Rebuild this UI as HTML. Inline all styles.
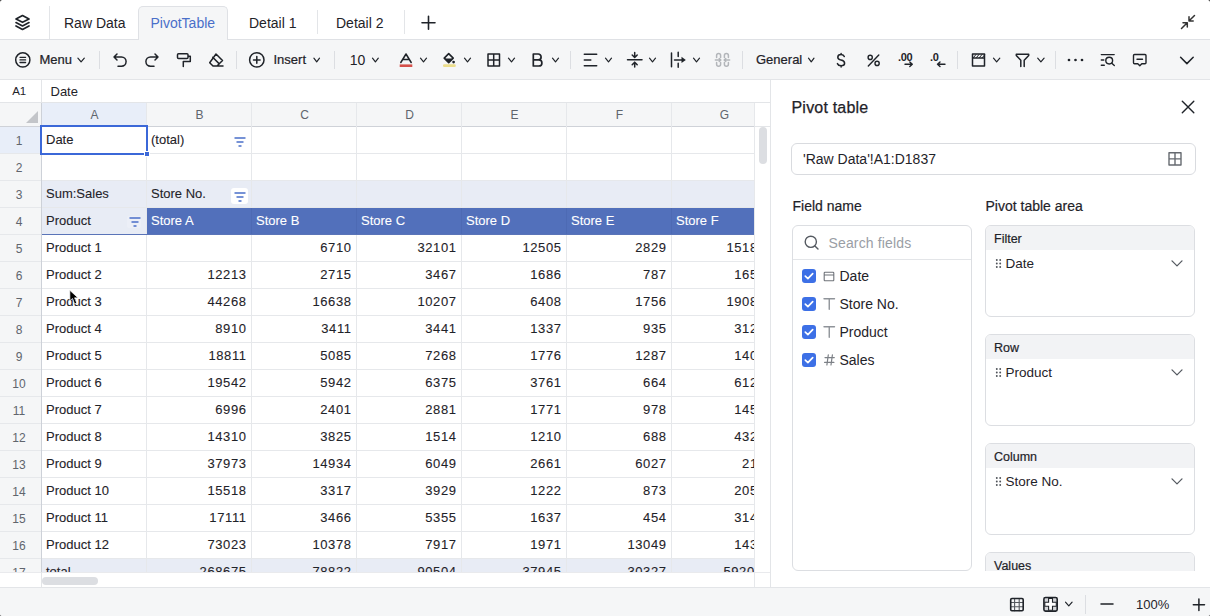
<!DOCTYPE html>
<html><head><meta charset="utf-8"><style>
*{margin:0;padding:0;box-sizing:content-box}
html{background:#3a3a3a}
body{position:relative;width:1210px;height:616px;overflow:hidden;background:#fff;font-family:"Liberation Sans", sans-serif;color:#1f2329;border-radius:2.5px}
.a{position:absolute}
.t{position:absolute;height:0;line-height:0;white-space:nowrap}
.ch{position:absolute;top:103px;height:23px;line-height:24px;text-align:center;font-size:12px;color:#60656d}
.rn{position:absolute;left:0;width:38px;height:26px;line-height:29px;text-align:center;font-size:12px;color:#60656d}
.cl{position:absolute;height:26px;line-height:25px;font-size:13px;white-space:nowrap;-webkit-text-stroke:0.1px currentColor}
.cr{position:absolute;height:26px;line-height:25px;font-size:13px;white-space:nowrap;text-align:right;-webkit-text-stroke:0.1px currentColor}
</style></head><body>
<div class="a" style="left:0;top:39px;width:1210px;height:1px;background:#dfe1e5"></div><div class="a" style="left:138px;top:6px;width:88px;height:34px;background:#f5f6f7;border:1px solid #dfe1e5;border-bottom:none;border-radius:5px 5px 0 0"></div><div class="a" style="left:49px;top:6px;width:1px;height:33px;background:#e3e5e8"></div><div class="a" style="left:317px;top:10px;width:1px;height:24px;background:#e3e5e8"></div><div class="a" style="left:404px;top:10px;width:1px;height:24px;background:#e3e5e8"></div><div class="t" style="left:64px;top:23.15px;font-size:14px;color:#1f2329;">Raw Data</div><div class="t" style="left:150.5px;top:23.15px;font-size:14px;color:#4a6fc9;">PivotTable</div><div class="t" style="left:249px;top:23.15px;font-size:14px;color:#1f2329;">Detail 1</div><div class="t" style="left:336px;top:23.15px;font-size:14px;color:#1f2329;">Detail 2</div><div class="a" style="left:0;top:40px;width:1210px;height:39px;background:#f5f6f7"></div><div class="a" style="left:0;top:79px;width:1210px;height:1px;background:#e3e5e8"></div><div class="t" style="left:39.5px;top:59.50px;font-size:13px;color:#1f2329;-webkit-text-stroke:0.22px #1f2329">Menu</div><div class="t" style="left:273.5px;top:59.50px;font-size:13px;color:#1f2329;-webkit-text-stroke:0.22px #1f2329">Insert</div><div class="t" style="left:349.8px;top:60.05px;font-size:14px;color:#1f2329;">10</div><div class="t" style="left:756px;top:60.20px;font-size:13px;color:#1f2329;-webkit-text-stroke:0.22px #1f2329">General</div><div class="a" style="left:0;top:102px;width:770px;height:1px;background:#e3e5e8"></div><div class="a" style="left:41px;top:80px;width:1px;height:22px;background:#e3e5e8"></div><div class="t" style="left:12.2px;top:91.02px;font-size:11.5px;color:#1f2329;">A1</div><div class="t" style="left:50.5px;top:91.80px;font-size:13px;color:#1f2329;">Date</div><div class="a" style="left:0;top:572px;width:770px;height:1px;background:#e9eaed"></div><div class="a" style="left:41px;top:572px;width:1px;height:15px;background:#e3e5e8"></div><div class="a" style="left:754px;top:103px;width:1px;height:484px;background:#e6e8eb"></div><div class="a" style="left:754px;top:126px;width:16px;height:1px;background:#e3e5e8"></div><div class="a" style="left:42px;top:577px;width:56px;height:8px;background:#dcdee2;border-radius:4px"></div><div class="a" style="left:759px;top:127px;width:8px;height:37px;background:#dcdee2;border-radius:4px"></div><div class="a" style="left:770px;top:80px;width:1px;height:507px;background:#e3e5e8"></div><div class="t" style="left:791.5px;top:107.76px;font-size:16px;color:#1f2329;letter-spacing:0.2px;-webkit-text-stroke:0.25px #1f2329">Pivot table</div><div class="a" style="left:791px;top:143px;width:403px;height:30px;border:1px solid #d9dbdf;border-radius:6px"></div><div class="t" style="left:803px;top:158.75px;font-size:14px;color:#1f2329;">'Raw Data'!A1:D1837</div><div class="t" style="left:792.5px;top:206.15px;font-size:14px;color:#1f2329;-webkit-text-stroke:0.2px #1f2329">Field name</div><div class="t" style="left:985.5px;top:206.15px;font-size:14px;color:#1f2329;-webkit-text-stroke:0.2px #1f2329">Pivot table area</div><div class="a" style="left:792px;top:225px;width:178px;height:344px;border:1px solid #dcdee2;border-radius:6px"></div><div class="a" style="left:793px;top:259px;width:178px;height:1px;background:#e3e5e8"></div><div class="t" style="left:828.5px;top:242.65px;font-size:14px;color:#9a9ea5;letter-spacing:0.15px">Search fields</div><div class="t" style="left:839.5px;top:276.15px;font-size:14px;color:#1f2329;">Date</div><div class="t" style="left:839.5px;top:304.15px;font-size:14px;color:#1f2329;">Store No.</div><div class="t" style="left:839.5px;top:332.15px;font-size:14px;color:#1f2329;">Product</div><div class="t" style="left:839.5px;top:360.15px;font-size:14px;color:#1f2329;">Sales</div><div class="a" style="left:985px;top:225px;width:208px;height:90px;border:1px solid #dcdee2;border-radius:6px;overflow:hidden"><div style="height:24px;background:#f2f3f5"></div></div><div class="t" style="left:994px;top:238.67px;font-size:12.5px;color:#1f2329;-webkit-text-stroke:0.2px #1f2329">Filter</div><div class="t" style="left:1005.5px;top:264.12px;font-size:13.5px;color:#1f2329;">Date</div><div class="a" style="left:985px;top:334px;width:208px;height:90px;border:1px solid #dcdee2;border-radius:6px;overflow:hidden"><div style="height:24px;background:#f2f3f5"></div></div><div class="t" style="left:994px;top:347.67px;font-size:12.5px;color:#1f2329;-webkit-text-stroke:0.2px #1f2329">Row</div><div class="t" style="left:1005.5px;top:373.12px;font-size:13.5px;color:#1f2329;">Product</div><div class="a" style="left:985px;top:443px;width:208px;height:90px;border:1px solid #dcdee2;border-radius:6px;overflow:hidden"><div style="height:24px;background:#f2f3f5"></div></div><div class="t" style="left:994px;top:456.67px;font-size:12.5px;color:#1f2329;-webkit-text-stroke:0.2px #1f2329">Column</div><div class="t" style="left:1005.5px;top:482.12px;font-size:13.5px;color:#1f2329;">Store No.</div><div class="a" style="left:985px;top:552px;width:208px;height:90px;border:1px solid #dcdee2;border-radius:6px;overflow:hidden"><div style="height:24px;background:#f2f3f5"></div></div><div class="t" style="left:994px;top:565.67px;font-size:12.5px;color:#1f2329;-webkit-text-stroke:0.2px #1f2329">Values</div><div class="a" style="left:771px;top:571px;width:439px;height:16px;background:#fff"></div><div class="a" style="left:0;top:587px;width:1210px;height:1px;background:#e3e5e8"></div><div class="a" style="left:0;top:588px;width:1210px;height:28px;background:#f5f6f7"></div><div class="t" style="left:1136px;top:605.00px;font-size:13px;color:#1f2329;">100%</div><div class="a" style="left:1085px;top:595px;width:1px;height:19px;background:#dcdee2"></div><div class="a" style="left:99px;top:51px;width:1px;height:18px;background:#dcdee2"></div><div class="a" style="left:236px;top:51px;width:1px;height:18px;background:#dcdee2"></div><div class="a" style="left:334px;top:51px;width:1px;height:18px;background:#dcdee2"></div><div class="a" style="left:570px;top:51px;width:1px;height:18px;background:#dcdee2"></div><div class="a" style="left:742px;top:51px;width:1px;height:18px;background:#dcdee2"></div><div class="a" style="left:957px;top:51px;width:1px;height:18px;background:#dcdee2"></div><div class="a" style="left:1055px;top:51px;width:1px;height:18px;background:#dcdee2"></div><div class="t" style="left:898px;top:57.19px;font-size:11px;color:#1f2329;font-weight:bold;letter-spacing:-0.3px">.00</div><div class="t" style="left:930px;top:57.19px;font-size:11px;color:#1f2329;font-weight:bold;letter-spacing:-0.3px">.0</div>
<div id="grid" style="position:absolute;left:0;top:103px;width:754px;height:469px;overflow:hidden"><div style="position:absolute;left:0;top:-103px;width:755px;height:616px"><div style="position:absolute;left:0;top:103px;width:755px;height:23px;background:#f5f6f7"></div><div style="position:absolute;left:42px;top:103px;width:104px;height:23px;background:#e8eef9"></div><div style="position:absolute;left:0;top:127px;width:41px;height:445px;background:#f5f6f7"></div><div style="position:absolute;left:0;top:127px;width:41px;height:26px;background:#e8eef9"></div><svg style="position:absolute;left:26px;top:111px" width="12" height="12"><path d="M12 0 L12 12 L0 12 Z" fill="#c3c5c9"/></svg><div class="ch" style="left:42px;width:105px">A</div><div class="ch" style="left:147px;width:105px">B</div><div class="ch" style="left:252px;width:105px">C</div><div class="ch" style="left:357px;width:105px">D</div><div class="ch" style="left:462px;width:105px">E</div><div class="ch" style="left:567px;width:105px">F</div><div class="ch" style="left:672px;width:105px">G</div><div style="position:absolute;left:42px;top:181px;width:713px;height:26px;background:#e8ecf5"></div><div style="position:absolute;left:42px;top:208px;width:104px;height:26px;background:#e8ecf5"></div><div style="position:absolute;left:147px;top:208px;width:608px;height:26px;background:#5270bb"></div><div style="position:absolute;left:42px;top:234px;width:713px;height:1px;background:#5a74b8;z-index:2"></div><div style="position:absolute;left:127px;top:216px;width:14px;height:12px;background:rgba(255,255,255,0.2);border-radius:2px"></div><div style="position:absolute;left:42px;top:559px;width:713px;height:26px;background:#e8ecf5"></div><div style="position:absolute;left:0;top:126px;width:755px;height:1px;background:#cfd2d8"></div><div style="position:absolute;left:0;top:153px;width:755px;height:1px;background:#e6e8eb"></div><div style="position:absolute;left:0;top:180px;width:755px;height:1px;background:#e6e8eb"></div><div style="position:absolute;left:0;top:207px;width:755px;height:1px;background:#e6e8eb"></div><div style="position:absolute;left:0;top:234px;width:755px;height:1px;background:#e6e8eb"></div><div style="position:absolute;left:0;top:261px;width:755px;height:1px;background:#e6e8eb"></div><div style="position:absolute;left:0;top:288px;width:755px;height:1px;background:#e6e8eb"></div><div style="position:absolute;left:0;top:315px;width:755px;height:1px;background:#e6e8eb"></div><div style="position:absolute;left:0;top:342px;width:755px;height:1px;background:#e6e8eb"></div><div style="position:absolute;left:0;top:369px;width:755px;height:1px;background:#e6e8eb"></div><div style="position:absolute;left:0;top:396px;width:755px;height:1px;background:#e6e8eb"></div><div style="position:absolute;left:0;top:423px;width:755px;height:1px;background:#e6e8eb"></div><div style="position:absolute;left:0;top:450px;width:755px;height:1px;background:#e6e8eb"></div><div style="position:absolute;left:0;top:477px;width:755px;height:1px;background:#e6e8eb"></div><div style="position:absolute;left:0;top:504px;width:755px;height:1px;background:#e6e8eb"></div><div style="position:absolute;left:0;top:531px;width:755px;height:1px;background:#e6e8eb"></div><div style="position:absolute;left:0;top:558px;width:755px;height:1px;background:#e6e8eb"></div><div style="position:absolute;left:0;top:585px;width:755px;height:1px;background:#e6e8eb"></div><div style="position:absolute;left:41px;top:103px;width:1px;height:469px;background:#cdd1d8"></div><div style="position:absolute;left:146px;top:103px;width:1px;height:469px;background:#e6e8eb"></div><div style="position:absolute;left:251px;top:103px;width:1px;height:469px;background:#e6e8eb"></div><div style="position:absolute;left:356px;top:103px;width:1px;height:469px;background:#e6e8eb"></div><div style="position:absolute;left:461px;top:103px;width:1px;height:469px;background:#e6e8eb"></div><div style="position:absolute;left:566px;top:103px;width:1px;height:469px;background:#e6e8eb"></div><div style="position:absolute;left:671px;top:103px;width:1px;height:469px;background:#e6e8eb"></div><div style="position:absolute;left:251px;top:208px;width:1px;height:26px;background:#4d6ab4"></div><div style="position:absolute;left:356px;top:208px;width:1px;height:26px;background:#4d6ab4"></div><div style="position:absolute;left:461px;top:208px;width:1px;height:26px;background:#4d6ab4"></div><div style="position:absolute;left:566px;top:208px;width:1px;height:26px;background:#4d6ab4"></div><div style="position:absolute;left:671px;top:208px;width:1px;height:26px;background:#4d6ab4"></div><div class="rn" style="top:127px">1</div><div class="rn" style="top:154px">2</div><div class="rn" style="top:181px">3</div><div class="rn" style="top:208px">4</div><div class="rn" style="top:235px">5</div><div class="rn" style="top:262px">6</div><div class="rn" style="top:289px">7</div><div class="rn" style="top:316px">8</div><div class="rn" style="top:343px">9</div><div class="rn" style="top:370px">10</div><div class="rn" style="top:397px">11</div><div class="rn" style="top:424px">12</div><div class="rn" style="top:451px">13</div><div class="rn" style="top:478px">14</div><div class="rn" style="top:505px">15</div><div class="rn" style="top:532px">16</div><div class="rn" style="top:559px">17</div><div class="cl" style="left:46px;top:127px;color:#1f2329;">Date</div><div class="cl" style="left:151px;top:127px;color:#1f2329;">(total)</div><div class="cl" style="left:46px;top:181px;color:#1f2329;">Sum:Sales</div><div class="cl" style="left:151px;top:181px;color:#1f2329;">Store No.</div><div class="cl" style="left:46px;top:208px;color:#1f2329;">Product</div><div class="cl" style="left:151px;top:208px;color:#ffffff;">Store A</div><div class="cl" style="left:256px;top:208px;color:#ffffff;">Store B</div><div class="cl" style="left:361px;top:208px;color:#ffffff;">Store C</div><div class="cl" style="left:466px;top:208px;color:#ffffff;">Store D</div><div class="cl" style="left:571px;top:208px;color:#ffffff;">Store E</div><div class="cl" style="left:676px;top:208px;color:#ffffff;">Store F</div><div class="cl" style="left:46px;top:235px;color:#1f2329;">Product 1</div><div class="cr" style="right:404px;top:235px;color:#1f2329;letter-spacing:0.6px;margin-right:-0.6px">6710</div><div class="cr" style="right:299px;top:235px;color:#1f2329;letter-spacing:0.6px;margin-right:-0.6px">32101</div><div class="cr" style="right:194px;top:235px;color:#1f2329;letter-spacing:0.6px;margin-right:-0.6px">12505</div><div class="cr" style="right:89px;top:235px;color:#1f2329;letter-spacing:0.6px;margin-right:-0.6px">2829</div><div class="cr" style="right:-10px;top:235px;color:#1f2329;letter-spacing:0.6px;margin-right:-0.6px">15180</div><div class="cl" style="left:46px;top:262px;color:#1f2329;">Product 2</div><div class="cr" style="right:509px;top:262px;color:#1f2329;letter-spacing:0.6px;margin-right:-0.6px">12213</div><div class="cr" style="right:404px;top:262px;color:#1f2329;letter-spacing:0.6px;margin-right:-0.6px">2715</div><div class="cr" style="right:299px;top:262px;color:#1f2329;letter-spacing:0.6px;margin-right:-0.6px">3467</div><div class="cr" style="right:194px;top:262px;color:#1f2329;letter-spacing:0.6px;margin-right:-0.6px">1686</div><div class="cr" style="right:89px;top:262px;color:#1f2329;letter-spacing:0.6px;margin-right:-0.6px">787</div><div class="cr" style="right:-10px;top:262px;color:#1f2329;letter-spacing:0.6px;margin-right:-0.6px">1650</div><div class="cl" style="left:46px;top:289px;color:#1f2329;">Product 3</div><div class="cr" style="right:509px;top:289px;color:#1f2329;letter-spacing:0.6px;margin-right:-0.6px">44268</div><div class="cr" style="right:404px;top:289px;color:#1f2329;letter-spacing:0.6px;margin-right:-0.6px">16638</div><div class="cr" style="right:299px;top:289px;color:#1f2329;letter-spacing:0.6px;margin-right:-0.6px">10207</div><div class="cr" style="right:194px;top:289px;color:#1f2329;letter-spacing:0.6px;margin-right:-0.6px">6408</div><div class="cr" style="right:89px;top:289px;color:#1f2329;letter-spacing:0.6px;margin-right:-0.6px">1756</div><div class="cr" style="right:-10px;top:289px;color:#1f2329;letter-spacing:0.6px;margin-right:-0.6px">19080</div><div class="cl" style="left:46px;top:316px;color:#1f2329;">Product 4</div><div class="cr" style="right:509px;top:316px;color:#1f2329;letter-spacing:0.6px;margin-right:-0.6px">8910</div><div class="cr" style="right:404px;top:316px;color:#1f2329;letter-spacing:0.6px;margin-right:-0.6px">3411</div><div class="cr" style="right:299px;top:316px;color:#1f2329;letter-spacing:0.6px;margin-right:-0.6px">3441</div><div class="cr" style="right:194px;top:316px;color:#1f2329;letter-spacing:0.6px;margin-right:-0.6px">1337</div><div class="cr" style="right:89px;top:316px;color:#1f2329;letter-spacing:0.6px;margin-right:-0.6px">935</div><div class="cr" style="right:-10px;top:316px;color:#1f2329;letter-spacing:0.6px;margin-right:-0.6px">3120</div><div class="cl" style="left:46px;top:343px;color:#1f2329;">Product 5</div><div class="cr" style="right:509px;top:343px;color:#1f2329;letter-spacing:0.6px;margin-right:-0.6px">18811</div><div class="cr" style="right:404px;top:343px;color:#1f2329;letter-spacing:0.6px;margin-right:-0.6px">5085</div><div class="cr" style="right:299px;top:343px;color:#1f2329;letter-spacing:0.6px;margin-right:-0.6px">7268</div><div class="cr" style="right:194px;top:343px;color:#1f2329;letter-spacing:0.6px;margin-right:-0.6px">1776</div><div class="cr" style="right:89px;top:343px;color:#1f2329;letter-spacing:0.6px;margin-right:-0.6px">1287</div><div class="cr" style="right:-10px;top:343px;color:#1f2329;letter-spacing:0.6px;margin-right:-0.6px">1400</div><div class="cl" style="left:46px;top:370px;color:#1f2329;">Product 6</div><div class="cr" style="right:509px;top:370px;color:#1f2329;letter-spacing:0.6px;margin-right:-0.6px">19542</div><div class="cr" style="right:404px;top:370px;color:#1f2329;letter-spacing:0.6px;margin-right:-0.6px">5942</div><div class="cr" style="right:299px;top:370px;color:#1f2329;letter-spacing:0.6px;margin-right:-0.6px">6375</div><div class="cr" style="right:194px;top:370px;color:#1f2329;letter-spacing:0.6px;margin-right:-0.6px">3761</div><div class="cr" style="right:89px;top:370px;color:#1f2329;letter-spacing:0.6px;margin-right:-0.6px">664</div><div class="cr" style="right:-10px;top:370px;color:#1f2329;letter-spacing:0.6px;margin-right:-0.6px">6120</div><div class="cl" style="left:46px;top:397px;color:#1f2329;">Product 7</div><div class="cr" style="right:509px;top:397px;color:#1f2329;letter-spacing:0.6px;margin-right:-0.6px">6996</div><div class="cr" style="right:404px;top:397px;color:#1f2329;letter-spacing:0.6px;margin-right:-0.6px">2401</div><div class="cr" style="right:299px;top:397px;color:#1f2329;letter-spacing:0.6px;margin-right:-0.6px">2881</div><div class="cr" style="right:194px;top:397px;color:#1f2329;letter-spacing:0.6px;margin-right:-0.6px">1771</div><div class="cr" style="right:89px;top:397px;color:#1f2329;letter-spacing:0.6px;margin-right:-0.6px">978</div><div class="cr" style="right:-10px;top:397px;color:#1f2329;letter-spacing:0.6px;margin-right:-0.6px">1450</div><div class="cl" style="left:46px;top:424px;color:#1f2329;">Product 8</div><div class="cr" style="right:509px;top:424px;color:#1f2329;letter-spacing:0.6px;margin-right:-0.6px">14310</div><div class="cr" style="right:404px;top:424px;color:#1f2329;letter-spacing:0.6px;margin-right:-0.6px">3825</div><div class="cr" style="right:299px;top:424px;color:#1f2329;letter-spacing:0.6px;margin-right:-0.6px">1514</div><div class="cr" style="right:194px;top:424px;color:#1f2329;letter-spacing:0.6px;margin-right:-0.6px">1210</div><div class="cr" style="right:89px;top:424px;color:#1f2329;letter-spacing:0.6px;margin-right:-0.6px">688</div><div class="cr" style="right:-10px;top:424px;color:#1f2329;letter-spacing:0.6px;margin-right:-0.6px">4320</div><div class="cl" style="left:46px;top:451px;color:#1f2329;">Product 9</div><div class="cr" style="right:509px;top:451px;color:#1f2329;letter-spacing:0.6px;margin-right:-0.6px">37973</div><div class="cr" style="right:404px;top:451px;color:#1f2329;letter-spacing:0.6px;margin-right:-0.6px">14934</div><div class="cr" style="right:299px;top:451px;color:#1f2329;letter-spacing:0.6px;margin-right:-0.6px">6049</div><div class="cr" style="right:194px;top:451px;color:#1f2329;letter-spacing:0.6px;margin-right:-0.6px">2661</div><div class="cr" style="right:89px;top:451px;color:#1f2329;letter-spacing:0.6px;margin-right:-0.6px">6027</div><div class="cr" style="right:-10px;top:451px;color:#1f2329;letter-spacing:0.6px;margin-right:-0.6px">210</div><div class="cl" style="left:46px;top:478px;color:#1f2329;">Product 10</div><div class="cr" style="right:509px;top:478px;color:#1f2329;letter-spacing:0.6px;margin-right:-0.6px">15518</div><div class="cr" style="right:404px;top:478px;color:#1f2329;letter-spacing:0.6px;margin-right:-0.6px">3317</div><div class="cr" style="right:299px;top:478px;color:#1f2329;letter-spacing:0.6px;margin-right:-0.6px">3929</div><div class="cr" style="right:194px;top:478px;color:#1f2329;letter-spacing:0.6px;margin-right:-0.6px">1222</div><div class="cr" style="right:89px;top:478px;color:#1f2329;letter-spacing:0.6px;margin-right:-0.6px">873</div><div class="cr" style="right:-10px;top:478px;color:#1f2329;letter-spacing:0.6px;margin-right:-0.6px">2050</div><div class="cl" style="left:46px;top:505px;color:#1f2329;">Product 11</div><div class="cr" style="right:509px;top:505px;color:#1f2329;letter-spacing:0.6px;margin-right:-0.6px">17111</div><div class="cr" style="right:404px;top:505px;color:#1f2329;letter-spacing:0.6px;margin-right:-0.6px">3466</div><div class="cr" style="right:299px;top:505px;color:#1f2329;letter-spacing:0.6px;margin-right:-0.6px">5355</div><div class="cr" style="right:194px;top:505px;color:#1f2329;letter-spacing:0.6px;margin-right:-0.6px">1637</div><div class="cr" style="right:89px;top:505px;color:#1f2329;letter-spacing:0.6px;margin-right:-0.6px">454</div><div class="cr" style="right:-10px;top:505px;color:#1f2329;letter-spacing:0.6px;margin-right:-0.6px">3140</div><div class="cl" style="left:46px;top:532px;color:#1f2329;">Product 12</div><div class="cr" style="right:509px;top:532px;color:#1f2329;letter-spacing:0.6px;margin-right:-0.6px">73023</div><div class="cr" style="right:404px;top:532px;color:#1f2329;letter-spacing:0.6px;margin-right:-0.6px">10378</div><div class="cr" style="right:299px;top:532px;color:#1f2329;letter-spacing:0.6px;margin-right:-0.6px">7917</div><div class="cr" style="right:194px;top:532px;color:#1f2329;letter-spacing:0.6px;margin-right:-0.6px">1971</div><div class="cr" style="right:89px;top:532px;color:#1f2329;letter-spacing:0.6px;margin-right:-0.6px">13049</div><div class="cr" style="right:-10px;top:532px;color:#1f2329;letter-spacing:0.6px;margin-right:-0.6px">1430</div><div class="cl" style="left:46px;top:559px;color:#1f2329;">total</div><div class="cr" style="right:509px;top:559px;color:#1f2329;letter-spacing:0.6px;margin-right:-0.6px">268675</div><div class="cr" style="right:404px;top:559px;color:#1f2329;letter-spacing:0.6px;margin-right:-0.6px">78822</div><div class="cr" style="right:299px;top:559px;color:#1f2329;letter-spacing:0.6px;margin-right:-0.6px">90504</div><div class="cr" style="right:194px;top:559px;color:#1f2329;letter-spacing:0.6px;margin-right:-0.6px">37945</div><div class="cr" style="right:89px;top:559px;color:#1f2329;letter-spacing:0.6px;margin-right:-0.6px">30327</div><div class="cr" style="right:-7px;top:559px;color:#1f2329;letter-spacing:0.6px;margin-right:-0.6px">59200</div><svg style="position:absolute;left:234px;top:137px" width="12" height="10"><path d="M0.5 1h11M2.5 5h7M4.5 9h3" stroke="#4a6fc9" stroke-width="1.3" fill="none"/></svg><div style="position:absolute;left:231px;top:188px;width:17px;height:16px;background:#ffffff;border-radius:3px"></div><svg style="position:absolute;left:234px;top:192px" width="12" height="10"><path d="M0.5 1h11M2.5 5h7M4.5 9h3" stroke="#4a6fc9" stroke-width="1.3" fill="none"/></svg><svg style="position:absolute;left:129px;top:217px" width="12" height="10"><path d="M0.5 1h11M2.5 5h7M4.5 9h3" stroke="#4a6fc9" stroke-width="1.3" fill="none"/></svg><div style="position:absolute;left:40px;top:125px;width:104px;height:26px;border:2px solid #3b68d8"></div><div style="position:absolute;left:144px;top:151px;width:6px;height:6px;background:#fff"></div><div style="position:absolute;left:145px;top:152px;width:4px;height:4px;background:#3b68d8"></div></div></div>
<svg class="a" style="left:0;top:0" width="1210" height="616" viewBox="0 0 1210 616"><path d="M22.5 15.5 L29 19 L22.5 22.3 L16 19 Z" fill="none" stroke="#1f2329" stroke-width="1.7" stroke-linecap="round" stroke-linejoin="round" /><path d="M16 22.6 L22.5 26 L29 22.6" fill="none" stroke="#1f2329" stroke-width="1.7" stroke-linecap="round" stroke-linejoin="round" /><path d="M16 26 L22.5 29.4 L29 26" fill="none" stroke="#1f2329" stroke-width="1.7" stroke-linecap="round" stroke-linejoin="round" /><path d="M1181.5 28.5 L1187 23 M1183 22.8 H1187.3 V27" fill="none" stroke="#333" stroke-width="1.5" stroke-linecap="round" stroke-linejoin="round" /><path d="M1194.5 15.5 L1189.2 20.8 M1189 16.8 V21 H1193.2" fill="none" stroke="#333" stroke-width="1.5" stroke-linecap="round" stroke-linejoin="round" /><path d="M422 22.7 H435 M428.5 16.3 V29.2" fill="none" stroke="#1f2329" stroke-width="1.6" stroke-linecap="round" stroke-linejoin="round" /><circle cx="22.8" cy="59.9" r="7.1" fill="none" stroke="#1f2329" stroke-width="1.5"/><path d="M20 57.3 H25.6 M20 59.9 H25.6 M20 62.5 H25.6" fill="none" stroke="#1f2329" stroke-width="1.3" stroke-linecap="round" stroke-linejoin="round" /><path d="M77.9 58.2 L81.1 61.8 L84.3 58.2" fill="none" stroke="#1f2329" stroke-width="1.2" stroke-linecap="round" stroke-linejoin="round" /><path d="M117 54 L114 57 L117 60 M114 57 H121.5 A4.6 4.6 0 0 1 121.5 66.2 H118" fill="none" stroke="#1f2329" stroke-width="1.5" stroke-linecap="round" stroke-linejoin="round" /><path d="M155 54 L158 57 L155 60 M158 57 H150.5 A4.6 4.6 0 0 0 150.5 66.2 H154" fill="none" stroke="#1f2329" stroke-width="1.5" stroke-linecap="round" stroke-linejoin="round" /><path d="M178.5 53.8 H187 A1 1 0 0 1 188 54.8 V57.5 A1 1 0 0 1 187 58.5 H178.5 A1 1 0 0 1 177.5 57.5 V54.8 A1 1 0 0 1 178.5 53.8 Z M188 56.2 H190.3 V61.5 H183.3 V66.5" fill="none" stroke="#1f2329" stroke-width="1.5" stroke-linecap="round" stroke-linejoin="round" /><path d="M216 54 L222.5 60.5 L217 66 H213 L209.7 62.7 Z M212.7 57.3 L219.3 63.9 M217 66 H223" fill="none" stroke="#1f2329" stroke-width="1.5" stroke-linecap="round" stroke-linejoin="round" /><circle cx="256.8" cy="59.9" r="7.2" fill="none" stroke="#1f2329" stroke-width="1.5"/><path d="M253.5 59.9 H260.1 M256.8 56.6 V63.2" fill="none" stroke="#1f2329" stroke-width="1.5" stroke-linecap="round" stroke-linejoin="round" /><path d="M313.9 58.2 L316.7 61.8 L319.5 58.2" fill="none" stroke="#1f2329" stroke-width="1.2" stroke-linecap="round" stroke-linejoin="round" /><path d="M372.5 58.2 L375.4 61.8 L378.3 58.2" fill="none" stroke="#1f2329" stroke-width="1.2" stroke-linecap="round" stroke-linejoin="round" /><path d="M400.8 62.5 L406 54 L411.2 62.5 M402.6 59.6 H409.4" fill="none" stroke="#1f2329" stroke-width="1.5" stroke-linecap="round" stroke-linejoin="round" /><rect x="399.7" y="64.4" width="12.6" height="2.6" fill="#d5504a"/><path d="M420.5 58.2 L423.5 61.8 L426.5 58.2" fill="none" stroke="#1f2329" stroke-width="1.2" stroke-linecap="round" stroke-linejoin="round" /><path d="M448.7 53.6 L453.2 58.1 L448.7 62.6 L444.2 58.1 Z" fill="none" stroke="#1f2329" stroke-width="1.6" stroke-linecap="round" stroke-linejoin="round" /><path d="M444.6 58.6 L452.8 58.6 L448.7 62.6 Z" fill="#1f2329"/><circle cx="453.6" cy="62.1" r="1.35" fill="#1f2329"/><rect x="443" y="64.2" width="12.8" height="2.8" rx="1.2" fill="#ebdd8c"/><path d="M464.5 58.2 L467.5 61.8 L470.5 58.2" fill="none" stroke="#1f2329" stroke-width="1.2" stroke-linecap="round" stroke-linejoin="round" /><path d="M488 54 H499.5 V66 H488 Z M493.7 54 V66 M488 60 H499.5" fill="none" stroke="#1f2329" stroke-width="1.5" stroke-linecap="round" stroke-linejoin="round" /><path d="M508.5 58.2 L511.5 61.8 L514.5 58.2" fill="none" stroke="#1f2329" stroke-width="1.2" stroke-linecap="round" stroke-linejoin="round" /><path d="M533.3 54 H538.2 A2.9 2.9 0 0 1 538.2 59.8 H533.3 Z M533.3 59.8 H538.8 A3.1 3.1 0 0 1 538.8 66 H533.3 Z" fill="none" stroke="#1f2329" stroke-width="1.7" stroke-linecap="round" stroke-linejoin="round" /><path d="M552.5 58.2 L555.5 61.8 L558.5 58.2" fill="none" stroke="#1f2329" stroke-width="1.2" stroke-linecap="round" stroke-linejoin="round" /><path d="M584.3 54.3 H596.7 M584.3 60 H590.8 M584.3 65.7 H596.7" fill="none" stroke="#1f2329" stroke-width="1.5" stroke-linecap="round" stroke-linejoin="round" /><path d="M605.5 58.2 L608.5 61.8 L611.5 58.2" fill="none" stroke="#1f2329" stroke-width="1.2" stroke-linecap="round" stroke-linejoin="round" /><path d="M627.5 59.8 H642 M634.7 52.5 V57.3 M632.2 55 L634.7 57.5 L637.2 55 M634.7 67 V62.3 M632.2 64.8 L634.7 62.2 L637.2 64.8" fill="none" stroke="#1f2329" stroke-width="1.5" stroke-linecap="round" stroke-linejoin="round" /><path d="M649.5 58.2 L652.5 61.8 L655.5 58.2" fill="none" stroke="#1f2329" stroke-width="1.2" stroke-linecap="round" stroke-linejoin="round" /><path d="M671.5 53 V66.8 M678.2 52.3 V56.5 M678.2 63.3 V67.3 M674.5 59.9 H682" fill="none" stroke="#1f2329" stroke-width="1.5" stroke-linecap="round" stroke-linejoin="round" /><path d="M681.5 56.8 L685.8 59.9 L681.5 63 Z" fill="#1f2329"/><path d="M693.5 58.2 L696.5 61.8 L699.5 58.2" fill="none" stroke="#1f2329" stroke-width="1.2" stroke-linecap="round" stroke-linejoin="round" /><path d="M716.6 57.4 V55.6 A2 2 0 0 1 720.6 55.6 V57.4 M716.6 62.5 V64.3 A2 2 0 0 0 720.6 64.3 V62.5 M724.4 57.4 V55.6 A2 2 0 0 1 728.4 55.6 V57.4 M724.4 62.5 V64.3 A2 2 0 0 0 728.4 64.3 V62.5" fill="none" stroke="#b3b6ba" stroke-width="1.5" stroke-linecap="round" stroke-linejoin="round" /><path d="M715.3 60 H720.8 M719.2 58.4 L720.9 60 L719.2 61.6 M729.7 60 H724.2 M725.8 58.4 L724.1 60 L725.8 61.6" fill="none" stroke="#b3b6ba" stroke-width="1.4" stroke-linecap="round" stroke-linejoin="round" /><path d="M808.5 58.2 L811.25 61.8 L814.0 58.2" fill="none" stroke="#1f2329" stroke-width="1.2" stroke-linecap="round" stroke-linejoin="round" /><path d="M972.5 54 H984.5 V66 H972.5 Z M972.5 58 H984.5" fill="none" stroke="#1f2329" stroke-width="1.5" stroke-linecap="round" stroke-linejoin="round" /><path d="M973.5 57.5 L976 54.5 M976.5 57.5 L979 54.5 M979.5 57.5 L982 54.5 M982.5 57.5 L984.5 55" fill="none" stroke="#1f2329" stroke-width="1" stroke-linecap="round" stroke-linejoin="round" /><path d="M993.5 58.2 L996.65 61.8 L999.8 58.2" fill="none" stroke="#1f2329" stroke-width="1.2" stroke-linecap="round" stroke-linejoin="round" /><path d="M1016.3 54.3 H1028.7 V55.5 L1024.2 60.3 V66.4 M1016.3 54.3 V55.5 L1020.8 60.3 V66.4" fill="none" stroke="#1f2329" stroke-width="1.5" stroke-linecap="round" stroke-linejoin="round" /><path d="M1037.7 58.2 L1040.9 61.8 L1044.1 58.2" fill="none" stroke="#1f2329" stroke-width="1.2" stroke-linecap="round" stroke-linejoin="round" /><circle cx="1069" cy="60" r="1.35" fill="#1f2329"/><circle cx="1075.5" cy="60" r="1.35" fill="#1f2329"/><circle cx="1082" cy="60" r="1.35" fill="#1f2329"/><path d="M1101.3 54.6 H1114.2 M1101.3 60 H1103.8 M1101.3 65.3 H1104.3" fill="none" stroke="#1f2329" stroke-width="1.4" stroke-linecap="round" stroke-linejoin="round" /><circle cx="1109.2" cy="60.6" r="3.4" fill="none" stroke="#1f2329" stroke-width="1.4"/><path d="M1111.8 63.2 L1114.3 65.6" fill="none" stroke="#1f2329" stroke-width="1.4" stroke-linecap="round" stroke-linejoin="round" /><path d="M1134.5 54.5 H1145 A1 1 0 0 1 1146 55.5 V62.8 A1 1 0 0 1 1145 63.8 H1141.8 L1139.8 65.8 L1137.8 63.8 H1134.5 A1 1 0 0 1 1133.5 62.8 V55.5 A1 1 0 0 1 1134.5 54.5 Z M1137 59.2 H1142.5" fill="none" stroke="#1f2329" stroke-width="1.4" stroke-linecap="round" stroke-linejoin="round" /><path d="M1180.6 57.2 L1186.9 63.6 L1193.2 57.2" fill="none" stroke="#1f2329" stroke-width="1.5" stroke-linecap="round" stroke-linejoin="round" /><path d="M1182.3 101.2 L1193.8 112.7 M1193.8 101.2 L1182.3 112.7" fill="none" stroke="#1f2329" stroke-width="1.4" stroke-linecap="round" stroke-linejoin="round" /><path d="M1169 152.8 H1181 V165 H1169 Z M1175 152.8 V165 M1169 158.9 H1181" fill="none" stroke="#666a70" stroke-width="1.4" stroke-linecap="round" stroke-linejoin="round" /><circle cx="810.8" cy="241.8" r="5.6" fill="none" stroke="#555a61" stroke-width="1.4"/><path d="M814.9 245.9 L818 249" fill="none" stroke="#555a61" stroke-width="1.4" stroke-linecap="round" stroke-linejoin="round" /><rect x="802" y="269" width="14" height="14" rx="3" fill="#3d70e6"/><path d="M805.3 276.2 L807.9 278.6 L812.7 273.6" fill="none" stroke="#ffffff" stroke-width="1.7" stroke-linecap="round" stroke-linejoin="round" /><rect x="802" y="297" width="14" height="14" rx="3" fill="#3d70e6"/><path d="M805.3 304.2 L807.9 306.6 L812.7 301.6" fill="none" stroke="#ffffff" stroke-width="1.7" stroke-linecap="round" stroke-linejoin="round" /><rect x="802" y="325" width="14" height="14" rx="3" fill="#3d70e6"/><path d="M805.3 332.2 L807.9 334.6 L812.7 329.6" fill="none" stroke="#ffffff" stroke-width="1.7" stroke-linecap="round" stroke-linejoin="round" /><rect x="802" y="353" width="14" height="14" rx="3" fill="#3d70e6"/><path d="M805.3 360.2 L807.9 362.6 L812.7 357.6" fill="none" stroke="#ffffff" stroke-width="1.7" stroke-linecap="round" stroke-linejoin="round" /><path d="M825 272.3 H833 A0.8 0.8 0 0 1 833.8 273.1 V280 A0.8 0.8 0 0 1 833 280.8 H825 A0.8 0.8 0 0 1 824.2 280 V273.1 A0.8 0.8 0 0 1 825 272.3 Z M824.2 275 H833.8" fill="none" stroke="#6f7379" stroke-width="1.1" stroke-linecap="round" stroke-linejoin="round" /><path d="M824 298.8 H834.5 M829.25 298.8 V309.2" fill="none" stroke="#8f9399" stroke-width="1.4" stroke-linecap="round" stroke-linejoin="round" /><path d="M824 326.8 H834.5 M829.25 326.8 V337.2" fill="none" stroke="#8f9399" stroke-width="1.4" stroke-linecap="round" stroke-linejoin="round" /><path d="M825 357.6 H834.3 M824.6 362.4 H833.9 M828.3 354.9 L826.9 365 M832.4 354.9 L831 365" fill="none" stroke="#7d8187" stroke-width="1.2" stroke-linecap="round" stroke-linejoin="round" /><circle cx="996.8" cy="260.0" r="0.95" fill="#4f5359"/><circle cx="996.8" cy="263.5" r="0.95" fill="#4f5359"/><circle cx="996.8" cy="267.0" r="0.95" fill="#4f5359"/><circle cx="1000.2" cy="260.0" r="0.95" fill="#4f5359"/><circle cx="1000.2" cy="263.5" r="0.95" fill="#4f5359"/><circle cx="1000.2" cy="267.0" r="0.95" fill="#4f5359"/><path d="M1172 260.9 L1177 265.9 L1182 260.9" fill="none" stroke="#555a61" stroke-width="1.3" stroke-linecap="round" stroke-linejoin="round" /><circle cx="996.8" cy="369.0" r="0.95" fill="#4f5359"/><circle cx="996.8" cy="372.5" r="0.95" fill="#4f5359"/><circle cx="996.8" cy="376.0" r="0.95" fill="#4f5359"/><circle cx="1000.2" cy="369.0" r="0.95" fill="#4f5359"/><circle cx="1000.2" cy="372.5" r="0.95" fill="#4f5359"/><circle cx="1000.2" cy="376.0" r="0.95" fill="#4f5359"/><path d="M1172 369.9 L1177 374.9 L1182 369.9" fill="none" stroke="#555a61" stroke-width="1.3" stroke-linecap="round" stroke-linejoin="round" /><circle cx="996.8" cy="478.0" r="0.95" fill="#4f5359"/><circle cx="996.8" cy="481.5" r="0.95" fill="#4f5359"/><circle cx="996.8" cy="485.0" r="0.95" fill="#4f5359"/><circle cx="1000.2" cy="478.0" r="0.95" fill="#4f5359"/><circle cx="1000.2" cy="481.5" r="0.95" fill="#4f5359"/><circle cx="1000.2" cy="485.0" r="0.95" fill="#4f5359"/><path d="M1172 478.9 L1177 483.9 L1182 478.9" fill="none" stroke="#555a61" stroke-width="1.3" stroke-linecap="round" stroke-linejoin="round" /><path d="M1014.6 598.5 V610.8 M1019.2 598.5 V610.8 M1010.7 602.5 H1023.2 M1010.7 606.8 H1023.2" fill="none" stroke="#55595f" stroke-width="1.1" stroke-linecap="round" stroke-linejoin="round" /><rect x="1010.7" y="598.5" width="12.5" height="12.3" rx="1.2" fill="none" stroke="#1f2329" stroke-width="1.6"/><rect x="1043.9" y="597.5" width="13.3" height="13.6" rx="1.6" fill="#d3d5d8" stroke="#1f2329" stroke-width="1.6"/><path d="M1048.6 598.4 H1052.5 V602.3 H1056.3 V606.3 H1052.5 V610.2 H1048.6 V606.3 H1044.8 V602.3 H1048.6 Z" fill="#fff" stroke="#1f2329" stroke-width="1.1"/><path d="M1065.5 602.2 L1068.8 605.8 L1072.1 602.2" fill="none" stroke="#1f2329" stroke-width="1.2" stroke-linecap="round" stroke-linejoin="round" /><path d="M1101 604 H1113" fill="none" stroke="#1f2329" stroke-width="1.5" stroke-linecap="round" stroke-linejoin="round" /><path d="M1193.3 604.7 H1204.5 M1198.9 599 V610.4" fill="none" stroke="#1f2329" stroke-width="1.5" stroke-linecap="round" stroke-linejoin="round" /><path d="M69.8 290.3 L69.9 300.8 L72.5 298.5 L74.6 303.9 L76.7 303 L74.6 297.8 L78.1 297.9 Z" fill="#000" stroke="#fff" stroke-width="0.7"/><path d="M844.3 56.6 C843.8 55.2 842.6 54.6 841.1 54.6 C839.2 54.6 837.8 55.6 837.8 57.3 C837.8 59.2 839.6 59.7 841.1 60.1 C843 60.5 844.6 61.2 844.6 63.2 C844.6 64.9 843.1 65.7 841.1 65.7 C839.4 65.7 838 65.1 837.4 63.6 M841.1 53.4 V54.6 M841.1 65.7 V66.9" fill="none" stroke="#1f2329" stroke-width="1.5" stroke-linecap="round" stroke-linejoin="round" /><circle cx="870.2" cy="57.4" r="2.1" fill="none" stroke="#1f2329" stroke-width="1.4"/><circle cx="877.1" cy="63.4" r="2.1" fill="none" stroke="#1f2329" stroke-width="1.4"/><path d="M868.3 65.9 L878.8 54.9" fill="none" stroke="#1f2329" stroke-width="1.4" stroke-linecap="round" stroke-linejoin="round" /><path d="M905 64.3 H912.3 M909.8 62 L912.3 64.3 L909.8 66.6" fill="none" stroke="#1f2329" stroke-width="1.4" stroke-linecap="round" stroke-linejoin="round" /><path d="M937.5 64.3 H945 M940 62 L937.5 64.3 L940 66.6" fill="none" stroke="#1f2329" stroke-width="1.4" stroke-linecap="round" stroke-linejoin="round" /></svg>
</body></html>
